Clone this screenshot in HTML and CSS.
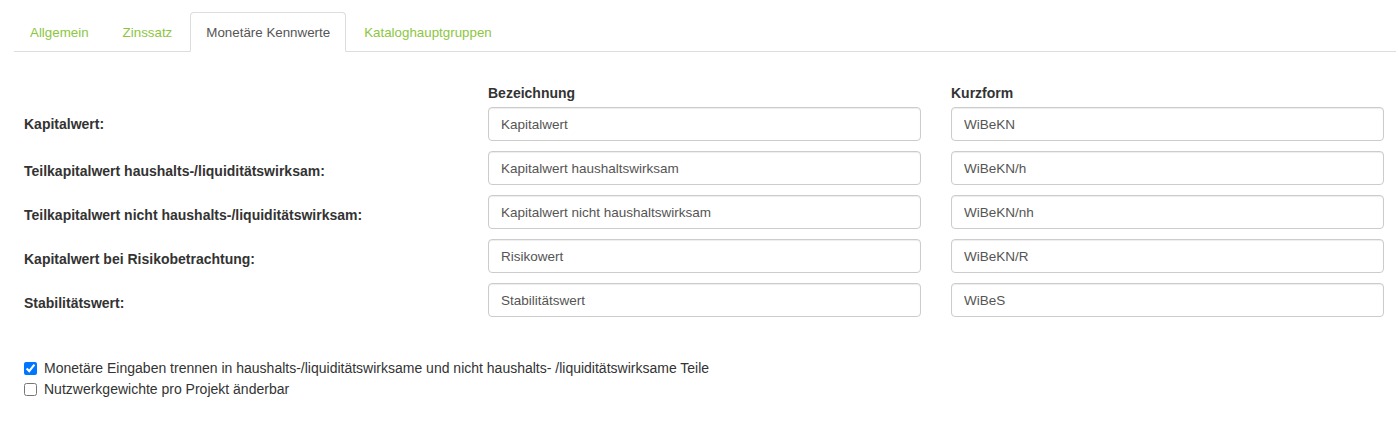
FILE: index.html
```html
<html>
<head>
    <meta charset="utf-8">
    <link rel="stylesheet" href="styles.css">
</head>
<body>
    <div class="page">
        <!--Reiter der Einstellungen-->
        <ul class="tabs">
            <li class="tab"><a href="#">Allgemein</a></li>
            <li class="tab"><a href="#">Zinssatz</a></li>
            <li class="tab active"><a href="#">Monetäre Kennwerte</a></li>
            <li class="tab"><a href="#">Kataloghauptgruppen</a></li>
        </ul>

        <!--Kennwerte mit Bezeichnung und Kurzform-->
        <div class="values">
            <div></div>
            <div class="col-head">Bezeichnung</div>
            <div class="col-head">Kurzform</div>

            <label class="row-label first">Kapitalwert:</label>
            <input class="field" type="text" value="Kapitalwert">
            <input class="field" type="text" value="WiBeKN">

            <label class="row-label">Teilkapitalwert haushalts-/liquiditätswirksam:</label>
            <input class="field" type="text" value="Kapitalwert haushaltswirksam">
            <input class="field" type="text" value="WiBeKN/h">

            <label class="row-label">Teilkapitalwert nicht haushalts-/liquiditätswirksam:</label>
            <input class="field" type="text" value="Kapitalwert nicht haushaltswirksam">
            <input class="field" type="text" value="WiBeKN/nh">

            <label class="row-label">Kapitalwert bei Risikobetrachtung:</label>
            <input class="field" type="text" value="Risikowert">
            <input class="field" type="text" value="WiBeKN/R">

            <label class="row-label">Stabilitätswert:</label>
            <input class="field" type="text" value="Stabilitätswert">
            <input class="field" type="text" value="WiBeS">
        </div>

        <!--Optionen-->
        <div class="options">
            <label class="option"><input type="checkbox" checked> Monetäre Eingaben trennen in haushalts-/liquiditätswirksame und nicht haushalts- /liquiditätswirksame Teile</label>
            <label class="option"><input type="checkbox"> Nutzwerkgewichte pro Projekt änderbar</label>
        </div>
    </div>
</body>
</html>
```

FILE: styles.css
```css
/*Estilos de la página de ajustes*/
body {
    margin: 0;
    background: white;
    color: #333;
    font-family: "Liberation Sans", Arial, sans-serif;
    font-size: 13px;
}

.page {
    padding: 12px 2px 0 14px;
}

.tabs {
    list-style: none;
    margin: 0;
    padding: 0;
    display: flex;
    border-bottom: 1px solid #ddd;
    font-size: 13.35px;
}
.tab {
    margin-right: 2px;
    margin-bottom: -1px;
}
.tab a {
    display: block;
    padding: 11px 15px 9px;
    line-height: 18px;
    border: 1px solid transparent;
    border-radius: 4px 4px 0 0;
    color: #8cc63f;
    text-decoration: none;
}
.tab.active a {
    color: #555;
    background: white;
    border-color: #ddd #ddd transparent;
}

.values {
    display: grid;
    grid-template-columns: 434px 433px 433px;
    column-gap: 30px;
    row-gap: 10px;
    padding: 32px 0 0 10px;
    align-items: center;
}
.col-head {
    font-weight: bold;
    font-size: 14px;
    line-height: 18px;
    margin-bottom: -5px;
}
.row-label {
    font-weight: bold;
    font-size: 14px;
    padding-top: 5px;
}
.row-label.first {
    padding-top: 0;
}
.field {
    height: 34px;
    padding: 6px 12px;
    border: 1px solid #ccc;
    border-radius: 4px;
    box-shadow: inset 0 1px 1px rgba(0, 0, 0, 0.075);
    font-family: "Liberation Sans", Arial, sans-serif;
    font-size: 13.5px;
    color: #555;
    box-sizing: border-box;
    width: 100%;
}

.options {
    padding: 41px 0 0 10px;
    font-size: 14px;
}
.option {
    display: flex;
    align-items: center;
    line-height: 20px;
    height: 20px;
    margin-bottom: 1px;
}
.option input {
    margin: 0 7px 0 0;
    width: 13px;
    height: 13px;
}
```
